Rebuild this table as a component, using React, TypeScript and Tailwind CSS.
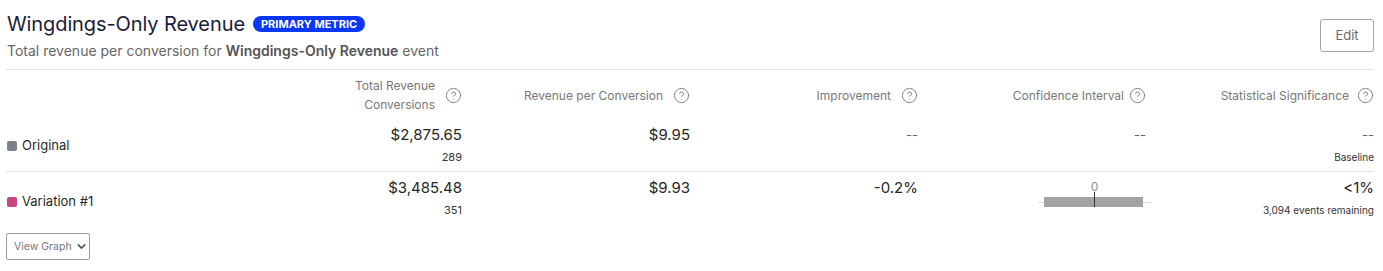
import React from 'react';
import { CircleHelp, ChevronDown } from 'lucide-react';

type Row = {
  name: string;
  color: string;
  total: string;
  conversions: string;
  perConversion: string;
  improvement: string;
  significance: string;
  significanceNote: string;
  baseline?: boolean;
};

const rows: Row[] = [
  { name: 'Original', color: 'bg-[#7b8388]', total: '$2,875.65', conversions: '289', perConversion: '$9.95', improvement: '--', significance: '--', significanceNote: 'Baseline', baseline: true },
  { name: 'Variation #1', color: 'bg-[#c4467f]', total: '$3,485.48', conversions: '351', perConversion: '$9.93', improvement: '-0.2%', significance: '<1%', significanceNote: '3,094 events remaining' },
];

const Help = () => <CircleHelp size={17} strokeWidth={1.2} className="text-[#6f6f6f] shrink-0" />;

const HeaderCell: React.FC<{ children: React.ReactNode; gap?: string }> = ({ children, gap = 'gap-[10px]' }) => (
  <div className={`flex items-center justify-end ${gap}`}>
    <div className="text-right text-[12px] leading-[19px] text-[#787878]">{children}</div>
    <Help />
  </div>
);

// small interval chart, centered on zero
const IntervalChart = () => (
  <svg width="112" height="30" viewBox="0 0 112 30" className="block">
    <line x1="0" y1="22.5" x2="112" y2="22.5" stroke="#dcdcdc" strokeWidth="1" />
    <rect x="5" y="17" width="99" height="10" fill="#a3a3a3" />
    <line x1="55.5" y1="12" x2="55.5" y2="27" stroke="#333" strokeWidth="1" />
    <text x="55.5" y="10.5" textAnchor="middle" fontSize="12" fill="#8f8f8f" fontFamily="Inter, sans-serif">0</text>
  </svg>
);

const App: React.FC = () => {
  return (
    <div className="w-[1383px] h-[271px] bg-white px-[6px] pt-[11px] font-['Inter',sans-serif]">
      <div className="flex justify-between items-start border-b border-[#e3e3e3] w-[1368px] pb-[8px]">
        <div className="pl-[1px]">
          <div className="flex items-center gap-[8px]">
            <h1 className="text-[20px] leading-[26px] text-[#1c1b3b] tracking-[-0.1px]">Wingdings-Only Revenue</h1>
            <span className="rounded-full bg-[#0a37f5] px-[8px] text-[11px] leading-[16px] font-bold text-white">PRIMARY METRIC</span>
          </div>
          <p className="mt-[4px] text-[14px] leading-[20px] text-[#666]">
            Total revenue per conversion for <span className="font-semibold text-[#555]">Wingdings-Only Revenue</span> event
          </p>
        </div>
        <button className="mt-[8px] w-[54px] h-[33px] border border-[#a6a6a6] rounded-[3px] text-[13px] text-[#6a6a6a]">Edit</button>
      </div>

      <div className="w-[1368px]">
        <div className="grid grid-cols-6 pt-[6px] pb-[5px]">
          <div />
          <HeaderCell>Total Revenue<br />Conversions</HeaderCell>
          <HeaderCell>Revenue per Conversion</HeaderCell>
          <HeaderCell>Improvement</HeaderCell>
          <HeaderCell gap="gap-[5px]">Confidence Interval</HeaderCell>
          <HeaderCell gap="gap-[8px]">Statistical Significance</HeaderCell>
        </div>

        {rows.map((r, i) => (
          <div key={r.name} className={`grid grid-cols-6 pt-[5px] ${i === 0 ? 'pb-[6px] border-b border-[#e3e3e3]' : 'pb-[12px]'}`}>
            <div className={`flex items-center gap-[5px] pl-[1px] ${i === 0 ? 'pt-[2px]' : 'pt-[9px]'}`}>
              <span className={`w-[10px] h-[10px] rounded-[2px] ${r.color}`} />
              <span className="text-[13px] text-[#2a2a2a]">{r.name}</span>
            </div>
            <div className="text-right">
              <div className="text-[15px] leading-[22px] text-[#262626]">{r.total}</div>
              <div className="mt-[3px] text-[11px] leading-[16px] text-[#333]">{r.conversions}</div>
            </div>
            <div className="text-right">
              <div className="text-[15px] leading-[22px] text-[#262626]">{r.perConversion}</div>
            </div>
            <div className="text-right">
              <div className={r.baseline ? 'text-[13px] leading-[22px] text-[#666]' : 'text-[15px] leading-[22px] text-[#262626]'}>{r.improvement}</div>
            </div>
            <div className="flex justify-end">
              {r.baseline ? (
                <div className="text-[13px] leading-[22px] text-[#666]">--</div>
              ) : (
                <div className="mr-[-5px] mt-[3px]">
                  <IntervalChart />
                </div>
              )}
            </div>
            <div className="text-right">
              <div className={r.baseline ? 'text-[13px] leading-[22px] text-[#666]' : 'text-[15px] leading-[22px] text-[#262626]'}>{r.significance}</div>
              <div className="mt-[3px] text-[10px] leading-[16px] text-[#333]">{r.significanceNote}</div>
            </div>
          </div>
        ))}

        <button className="mt-[3px] flex items-center gap-[3px] h-[27px] w-[84px] border border-[#9d9d9d] rounded-[2px] pl-[7px] text-[10.5px] text-[#777] whitespace-nowrap">
          View Graph
          <ChevronDown size={13} strokeWidth={3} className="text-[#555]" />
        </button>
      </div>
    </div>
  );
};

export default App;
